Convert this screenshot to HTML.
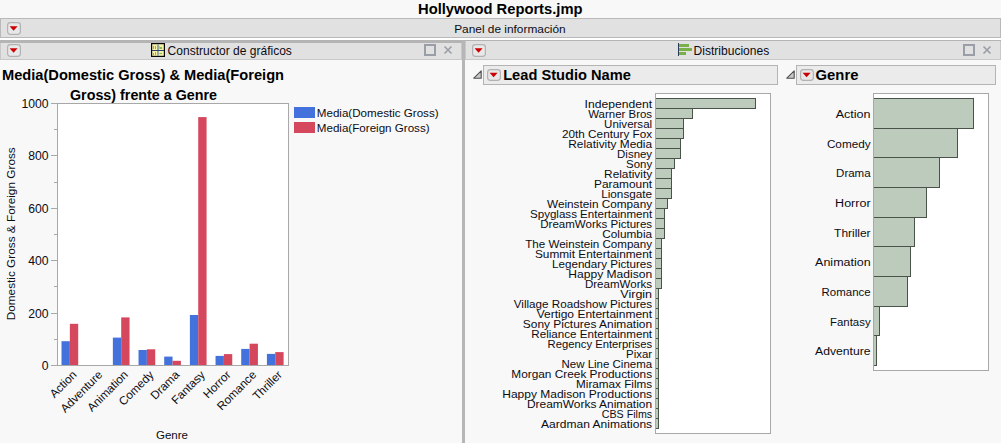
<!DOCTYPE html>
<html><head><meta charset="utf-8"><style>
html,body{margin:0;padding:0;width:1001px;height:443px;overflow:hidden;background:#f8f8f8;}
svg{display:block;font-family:"Liberation Sans", sans-serif;}
</style></head><body>
<svg width="1001" height="443" viewBox="0 0 1001 443">
<rect x="0" y="0" width="1001" height="443" fill="#f8f8f8" />
<text x="418" y="14" font-size="14.6" font-weight="bold" text-anchor="start" fill="#000" textLength="164.5" lengthAdjust="spacingAndGlyphs">Hollywood Reports.jmp</text>
<rect x="0" y="18" width="1001" height="20" fill="#b9b9b9" />
<rect x="1" y="19" width="999" height="18" fill="#e1e1e1" />
<rect x="7.6" y="22.6" width="12.8" height="11.8" rx="2.8" ry="2.8" fill="#e8e8e8" stroke="#b2b2b2" stroke-width="1.2"/>
<path d="M9.6,26.2 L17.6,26.2 L13.6,30.799999999999997 Z" fill="#cc0000"/>
<text x="454.2" y="32.7" font-size="11.7" font-weight="normal" text-anchor="start" fill="#0c0c14" textLength="111.5" lengthAdjust="spacingAndGlyphs">Panel de información</text>
<rect x="0" y="38" width="1001" height="2" fill="#ffffff" />
<rect x="0" y="40" width="462" height="20" fill="#c8c8c8" />
<rect x="0" y="40" width="462" height="3" fill="#b4b4b4" />
<rect x="1" y="43" width="460" height="16" fill="#e1e1e1" />
<rect x="7.6" y="44.6" width="12.8" height="11.8" rx="2.8" ry="2.8" fill="#e8e8e8" stroke="#b2b2b2" stroke-width="1.2"/>
<path d="M9.6,48.2 L17.6,48.2 L13.6,52.800000000000004 Z" fill="#cc0000"/>
<rect x="151.6" y="43.6" width="12.8" height="12.8" fill="#f6f3a8" stroke="#080808" stroke-width="1.2"/>
<rect x="157" y="44" width="2" height="12" fill="#9aaaa4" />
<rect x="152" y="50" width="12" height="1" fill="#2a3f6a" />
<rect x="153" y="46" width="1" height="3" fill="#86bc58" />
<rect x="155" y="46" width="1" height="3" fill="#86bc58" />
<rect x="159" y="46" width="1" height="3" fill="#b0d080" />
<rect x="160" y="47" width="2" height="2" fill="#86bc58" />
<rect x="153" y="53" width="1" height="2" fill="#86bc58" />
<rect x="155" y="52" width="1" height="3" fill="#86bc58" />
<rect x="159" y="53" width="1" height="1" fill="#b0d080" />
<rect x="160" y="53" width="2" height="1" fill="#86bc58" />
<text x="167.6" y="54.5" font-size="11.85" font-weight="normal" text-anchor="start" fill="#0c0c14" textLength="124.3" lengthAdjust="spacingAndGlyphs">Constructor de gráficos</text>
<rect x="425" y="45" width="10" height="10" fill="none" stroke="#9a9ea6" stroke-width="2"/>
<path d="M444.5,46.5 L451.5,53.5 M451.5,46.5 L444.5,53.5" stroke="#9a9ea6" stroke-width="1.6"/>
<rect x="465" y="40" width="536" height="20" fill="#c8c8c8" />
<rect x="465" y="40" width="536" height="1" fill="#b4b4b4" />
<rect x="466" y="41" width="534" height="18" fill="#e1e1e1" />
<rect x="472.6" y="44.6" width="12.8" height="11.8" rx="2.8" ry="2.8" fill="#e8e8e8" stroke="#b2b2b2" stroke-width="1.2"/>
<path d="M474.6,48.2 L482.6,48.2 L478.6,52.800000000000004 Z" fill="#cc0000"/>
<rect x="678" y="43" width="1" height="13" fill="#2a3a5a" />
<rect x="679" y="44" width="10" height="3" fill="#7ab048" />
<rect x="679" y="48" width="13" height="3" fill="#7ab048" />
<rect x="679" y="52" width="7" height="3" fill="#7ab048" />
<text x="693.6" y="54.5" font-size="11.85" font-weight="normal" text-anchor="start" fill="#0c0c14" textLength="75.6" lengthAdjust="spacingAndGlyphs">Distribuciones</text>
<rect x="964" y="45" width="10" height="10" fill="none" stroke="#9a9ea6" stroke-width="2"/>
<path d="M983.5,46.5 L990.5,53.5 M990.5,46.5 L983.5,53.5" stroke="#9a9ea6" stroke-width="1.6"/>
<rect x="462" y="40" width="3" height="403" fill="#b6b6b6" />
<text x="2" y="79.7" font-size="14" font-weight="bold" text-anchor="start" fill="#000" textLength="282" lengthAdjust="spacingAndGlyphs">Media(Domestic Gross) &amp; Media(Foreign</text>
<text x="70" y="99.5" font-size="14" font-weight="bold" text-anchor="start" fill="#000" textLength="147" lengthAdjust="spacingAndGlyphs">Gross) frente a Genre</text>
<rect x="57" y="103" width="232" height="263" fill="#ffffff" />
<rect x="57" y="103" width="232" height="1" fill="#a8a8a8" />
<rect x="288" y="103" width="1" height="263" fill="#a8a8a8" />
<rect x="57" y="103" width="1" height="263" fill="#a8a8a8" />
<rect x="57" y="365" width="232" height="1" fill="#a8a8a8" />
<rect x="51" y="365" width="6" height="1" fill="#a8a8a8" />
<text x="48.5" y="370.1" font-size="12.2" font-weight="normal" text-anchor="end" fill="#0c0c14" >0</text>
<rect x="54" y="339" width="3" height="1" fill="#a8a8a8" />
<rect x="51" y="313" width="6" height="1" fill="#a8a8a8" />
<text x="48.5" y="318.1" font-size="12.2" font-weight="normal" text-anchor="end" fill="#0c0c14" >200</text>
<rect x="54" y="286" width="3" height="1" fill="#a8a8a8" />
<rect x="51" y="260" width="6" height="1" fill="#a8a8a8" />
<text x="48.5" y="265.1" font-size="12.2" font-weight="normal" text-anchor="end" fill="#0c0c14" >400</text>
<rect x="54" y="234" width="3" height="1" fill="#a8a8a8" />
<rect x="51" y="208" width="6" height="1" fill="#a8a8a8" />
<text x="48.5" y="213.1" font-size="12.2" font-weight="normal" text-anchor="end" fill="#0c0c14" >600</text>
<rect x="54" y="182" width="3" height="1" fill="#a8a8a8" />
<rect x="51" y="155" width="6" height="1" fill="#a8a8a8" />
<text x="48.5" y="160.1" font-size="12.2" font-weight="normal" text-anchor="end" fill="#0c0c14" >800</text>
<rect x="54" y="129" width="3" height="1" fill="#a8a8a8" />
<rect x="51" y="103" width="6" height="1" fill="#a8a8a8" />
<text x="48.5" y="108.1" font-size="12.2" font-weight="normal" text-anchor="end" fill="#0c0c14" >1000</text>
<rect x="61.5" y="341.2" width="8.35" height="23.8" fill="#4472dd" />
<rect x="69.85" y="323.8" width="8.35" height="41.2" fill="#d5475c" />
<text x="0" y="0" font-size="11.7" text-anchor="end" fill="#0c0c14" transform="translate(77.35,375.5) rotate(-45)">Action</text>
<text x="0" y="0" font-size="11.7" text-anchor="end" fill="#0c0c14" transform="translate(103.02,375.5) rotate(-45)">Adventure</text>
<rect x="112.85" y="337.6" width="8.35" height="27.4" fill="#4472dd" />
<rect x="121.2" y="317.4" width="8.35" height="47.6" fill="#d5475c" />
<text x="0" y="0" font-size="11.7" text-anchor="end" fill="#0c0c14" transform="translate(128.70,375.5) rotate(-45)">Animation</text>
<rect x="138.53" y="350" width="8.35" height="15" fill="#4472dd" />
<rect x="146.88" y="349.3" width="8.35" height="15.7" fill="#d5475c" />
<text x="0" y="0" font-size="11.7" text-anchor="end" fill="#0c0c14" transform="translate(154.38,375.5) rotate(-45)">Comedy</text>
<rect x="164.2" y="356.6" width="8.35" height="8.4" fill="#4472dd" />
<rect x="172.55" y="360.8" width="8.35" height="4.2" fill="#d5475c" />
<text x="0" y="0" font-size="11.7" text-anchor="end" fill="#0c0c14" transform="translate(180.05,375.5) rotate(-45)">Drama</text>
<rect x="189.88" y="315" width="8.35" height="50" fill="#4472dd" />
<rect x="198.22" y="117.1" width="8.35" height="247.9" fill="#d5475c" />
<text x="0" y="0" font-size="11.7" text-anchor="end" fill="#0c0c14" transform="translate(205.72,375.5) rotate(-45)">Fantasy</text>
<rect x="215.55" y="355.9" width="8.35" height="9.1" fill="#4472dd" />
<rect x="223.9" y="354.1" width="8.35" height="10.9" fill="#d5475c" />
<text x="0" y="0" font-size="11.7" text-anchor="end" fill="#0c0c14" transform="translate(231.40,375.5) rotate(-45)">Horror</text>
<rect x="241.22" y="348.9" width="8.35" height="16.1" fill="#4472dd" />
<rect x="249.57" y="343.7" width="8.35" height="21.3" fill="#d5475c" />
<text x="0" y="0" font-size="11.7" text-anchor="end" fill="#0c0c14" transform="translate(257.07,375.5) rotate(-45)">Romance</text>
<rect x="266.9" y="353.9" width="8.35" height="11.1" fill="#4472dd" />
<rect x="275.25" y="352.1" width="8.35" height="12.9" fill="#d5475c" />
<text x="0" y="0" font-size="11.7" text-anchor="end" fill="#0c0c14" transform="translate(282.75,375.5) rotate(-45)">Thriller</text>
<text x="172" y="439" font-size="11.5" font-weight="normal" text-anchor="middle" fill="#0c0c14" >Genre</text>
<text x="0" y="0" font-size="11.8" text-anchor="middle" fill="#0c0c14" transform="translate(14.6,233.8) rotate(-90)">Domestic Gross &amp; Foreign Gross</text>
<rect x="294" y="107" width="21" height="11" fill="#4472dd" />
<rect x="294" y="122" width="21" height="11" fill="#d5475c" />
<text x="316.8" y="116.8" font-size="11.6" font-weight="normal" text-anchor="start" fill="#0c0c14" >Media(Domestic Gross)</text>
<text x="316.8" y="131.6" font-size="11.6" font-weight="normal" text-anchor="start" fill="#0c0c14" >Media(Foreign Gross)</text>
<path d="M473.8,78.2 L481.2,70.8 L481.2,78.2 Z" fill="#c8c8c8" stroke="#505050" stroke-width="1.1" stroke-linejoin="round"/>
<rect x="483.5" y="65.5" width="294" height="19" fill="#ebebeb" stroke="#b4b4b4" stroke-width="1"/>
<rect x="487.6" y="69.6" width="12.8" height="10.8" rx="2.8" ry="2.8" fill="#e8e8e8" stroke="#b2b2b2" stroke-width="1.2"/>
<path d="M489.6,72.7 L497.6,72.7 L493.6,77.3 Z" fill="#cc0000"/>
<text x="503.2" y="79.9" font-size="14.4" font-weight="bold" text-anchor="start" fill="#000" textLength="127.6" lengthAdjust="spacingAndGlyphs">Lead Studio Name</text>
<path d="M786.8,78.2 L794.2,70.8 L794.2,78.2 Z" fill="#c8c8c8" stroke="#505050" stroke-width="1.1" stroke-linejoin="round"/>
<rect x="796.5" y="65.5" width="199" height="19" fill="#ebebeb" stroke="#b4b4b4" stroke-width="1"/>
<rect x="800.6" y="69.6" width="12.8" height="10.8" rx="2.8" ry="2.8" fill="#e8e8e8" stroke="#b2b2b2" stroke-width="1.2"/>
<path d="M802.6,72.7 L810.6,72.7 L806.6,77.3 Z" fill="#cc0000"/>
<text x="815.6" y="79.6" font-size="14.3" font-weight="bold" text-anchor="start" fill="#000" textLength="42.8" lengthAdjust="spacingAndGlyphs">Genre</text>
<rect x="655" y="93" width="116" height="341" fill="#a8a8a8" />
<rect x="656" y="94" width="114" height="339" fill="#ffffff" />
<rect x="655" y="98" width="101" height="11" fill="#4a534a" />
<rect x="656" y="99" width="99" height="9" fill="#bccbbb" />
<text x="652.1" y="107.8" font-size="11.6" font-weight="normal" text-anchor="end" fill="#0c0c14" textLength="67.5" lengthAdjust="spacingAndGlyphs">Independent</text>
<rect x="655" y="108" width="38" height="11" fill="#4a534a" />
<rect x="656" y="109" width="36" height="9" fill="#bccbbb" />
<text x="652.1" y="117.8" font-size="11.6" font-weight="normal" text-anchor="end" fill="#0c0c14" textLength="63.9" lengthAdjust="spacingAndGlyphs">Warner Bros</text>
<rect x="655" y="118" width="29" height="11" fill="#4a534a" />
<rect x="656" y="119" width="27" height="9" fill="#bccbbb" />
<text x="652.1" y="127.8" font-size="11.6" font-weight="normal" text-anchor="end" fill="#0c0c14" textLength="48.0" lengthAdjust="spacingAndGlyphs">Universal</text>
<rect x="655" y="128" width="29" height="11" fill="#4a534a" />
<rect x="656" y="129" width="27" height="9" fill="#bccbbb" />
<text x="652.1" y="137.8" font-size="11.6" font-weight="normal" text-anchor="end" fill="#0c0c14" textLength="90.1" lengthAdjust="spacingAndGlyphs">20th Century Fox</text>
<rect x="655" y="138" width="26" height="11" fill="#4a534a" />
<rect x="656" y="139" width="24" height="9" fill="#bccbbb" />
<text x="652.1" y="147.8" font-size="11.6" font-weight="normal" text-anchor="end" fill="#0c0c14" textLength="83.8" lengthAdjust="spacingAndGlyphs">Relativity Media</text>
<rect x="655" y="148" width="26" height="11" fill="#4a534a" />
<rect x="656" y="149" width="24" height="9" fill="#bccbbb" />
<text x="652.1" y="157.8" font-size="11.6" font-weight="normal" text-anchor="end" fill="#0c0c14" textLength="35.0" lengthAdjust="spacingAndGlyphs">Disney</text>
<rect x="655" y="158" width="20" height="11" fill="#4a534a" />
<rect x="656" y="159" width="18" height="9" fill="#bccbbb" />
<text x="652.1" y="167.8" font-size="11.6" font-weight="normal" text-anchor="end" fill="#0c0c14" textLength="26.0" lengthAdjust="spacingAndGlyphs">Sony</text>
<rect x="655" y="168" width="17" height="11" fill="#4a534a" />
<rect x="656" y="169" width="15" height="9" fill="#bccbbb" />
<text x="652.1" y="177.8" font-size="11.6" font-weight="normal" text-anchor="end" fill="#0c0c14" textLength="48.0" lengthAdjust="spacingAndGlyphs">Relativity</text>
<rect x="655" y="178" width="17" height="11" fill="#4a534a" />
<rect x="656" y="179" width="15" height="9" fill="#bccbbb" />
<text x="652.1" y="187.8" font-size="11.6" font-weight="normal" text-anchor="end" fill="#0c0c14" textLength="58.1" lengthAdjust="spacingAndGlyphs">Paramount</text>
<rect x="655" y="188" width="17" height="11" fill="#4a534a" />
<rect x="656" y="189" width="15" height="9" fill="#bccbbb" />
<text x="652.1" y="197.8" font-size="11.6" font-weight="normal" text-anchor="end" fill="#0c0c14" textLength="50.9" lengthAdjust="spacingAndGlyphs">Lionsgate</text>
<rect x="655" y="198" width="13" height="11" fill="#4a534a" />
<rect x="656" y="199" width="11" height="9" fill="#bccbbb" />
<text x="652.1" y="207.8" font-size="11.6" font-weight="normal" text-anchor="end" fill="#0c0c14" textLength="105.1" lengthAdjust="spacingAndGlyphs">Weinstein Company</text>
<rect x="655" y="208" width="10" height="11" fill="#4a534a" />
<rect x="656" y="209" width="8" height="9" fill="#bccbbb" />
<text x="652.1" y="217.8" font-size="11.6" font-weight="normal" text-anchor="end" fill="#0c0c14" textLength="122.1" lengthAdjust="spacingAndGlyphs">Spyglass Entertainment</text>
<rect x="655" y="218" width="10" height="11" fill="#4a534a" />
<rect x="656" y="219" width="8" height="9" fill="#bccbbb" />
<text x="652.1" y="227.8" font-size="11.6" font-weight="normal" text-anchor="end" fill="#0c0c14" textLength="111.8" lengthAdjust="spacingAndGlyphs">DreamWorks Pictures</text>
<rect x="655" y="228" width="10" height="11" fill="#4a534a" />
<rect x="656" y="229" width="8" height="9" fill="#bccbbb" />
<text x="652.1" y="237.8" font-size="11.6" font-weight="normal" text-anchor="end" fill="#0c0c14" textLength="49.8" lengthAdjust="spacingAndGlyphs">Columbia</text>
<rect x="655" y="238" width="7" height="11" fill="#4a534a" />
<rect x="656" y="239" width="5" height="9" fill="#bccbbb" />
<text x="652.1" y="247.8" font-size="11.6" font-weight="normal" text-anchor="end" fill="#0c0c14" textLength="126.9" lengthAdjust="spacingAndGlyphs">The Weinstein Company</text>
<rect x="655" y="248" width="7" height="11" fill="#4a534a" />
<rect x="656" y="249" width="5" height="9" fill="#bccbbb" />
<text x="652.1" y="257.8" font-size="11.6" font-weight="normal" text-anchor="end" fill="#0c0c14" textLength="117.2" lengthAdjust="spacingAndGlyphs">Summit Entertainment</text>
<rect x="655" y="258" width="7" height="11" fill="#4a534a" />
<rect x="656" y="259" width="5" height="9" fill="#bccbbb" />
<text x="652.1" y="267.8" font-size="11.6" font-weight="normal" text-anchor="end" fill="#0c0c14" textLength="100.0" lengthAdjust="spacingAndGlyphs">Legendary Pictures</text>
<rect x="655" y="268" width="7" height="11" fill="#4a534a" />
<rect x="656" y="269" width="5" height="9" fill="#bccbbb" />
<text x="652.1" y="277.8" font-size="11.6" font-weight="normal" text-anchor="end" fill="#0c0c14" textLength="83.8" lengthAdjust="spacingAndGlyphs">Happy Madison</text>
<rect x="655" y="278" width="7" height="11" fill="#4a534a" />
<rect x="656" y="279" width="5" height="9" fill="#bccbbb" />
<text x="652.1" y="287.8" font-size="11.6" font-weight="normal" text-anchor="end" fill="#0c0c14" textLength="67.2" lengthAdjust="spacingAndGlyphs">DreamWorks</text>
<rect x="655" y="288" width="4" height="11" fill="#4a534a" />
<rect x="656" y="289" width="2" height="9" fill="#bccbbb" />
<text x="652.1" y="297.8" font-size="11.6" font-weight="normal" text-anchor="end" fill="#0c0c14" textLength="31.8" lengthAdjust="spacingAndGlyphs">Virgin</text>
<rect x="655" y="298" width="4" height="11" fill="#4a534a" />
<rect x="656" y="299" width="2" height="9" fill="#bccbbb" />
<text x="652.1" y="307.8" font-size="11.6" font-weight="normal" text-anchor="end" fill="#0c0c14" textLength="138.3" lengthAdjust="spacingAndGlyphs">Village Roadshow Pictures</text>
<rect x="655" y="308" width="4" height="11" fill="#4a534a" />
<rect x="656" y="309" width="2" height="9" fill="#bccbbb" />
<text x="652.1" y="317.8" font-size="11.6" font-weight="normal" text-anchor="end" fill="#0c0c14" textLength="115.4" lengthAdjust="spacingAndGlyphs">Vertigo Entertainment</text>
<rect x="655" y="318" width="4" height="11" fill="#4a534a" />
<rect x="656" y="319" width="2" height="9" fill="#bccbbb" />
<text x="652.1" y="327.8" font-size="11.6" font-weight="normal" text-anchor="end" fill="#0c0c14" textLength="129.3" lengthAdjust="spacingAndGlyphs">Sony Pictures Animation</text>
<rect x="655" y="328" width="4" height="11" fill="#4a534a" />
<rect x="656" y="329" width="2" height="9" fill="#bccbbb" />
<text x="652.1" y="337.8" font-size="11.6" font-weight="normal" text-anchor="end" fill="#0c0c14" textLength="120.8" lengthAdjust="spacingAndGlyphs">Reliance Entertainment</text>
<rect x="655" y="338" width="4" height="11" fill="#4a534a" />
<rect x="656" y="339" width="2" height="9" fill="#bccbbb" />
<text x="652.1" y="347.8" font-size="11.6" font-weight="normal" text-anchor="end" fill="#0c0c14" textLength="104.5" lengthAdjust="spacingAndGlyphs">Regency Enterprises</text>
<rect x="655" y="348" width="4" height="11" fill="#4a534a" />
<rect x="656" y="349" width="2" height="9" fill="#bccbbb" />
<text x="652.1" y="357.8" font-size="11.6" font-weight="normal" text-anchor="end" fill="#0c0c14" textLength="26.0" lengthAdjust="spacingAndGlyphs">Pixar</text>
<rect x="655" y="358" width="4" height="11" fill="#4a534a" />
<rect x="656" y="359" width="2" height="9" fill="#bccbbb" />
<text x="652.1" y="367.8" font-size="11.6" font-weight="normal" text-anchor="end" fill="#0c0c14" textLength="90.6" lengthAdjust="spacingAndGlyphs">New Line Cinema</text>
<rect x="655" y="368" width="4" height="11" fill="#4a534a" />
<rect x="656" y="369" width="2" height="9" fill="#bccbbb" />
<text x="652.1" y="377.8" font-size="11.6" font-weight="normal" text-anchor="end" fill="#0c0c14" textLength="140.8" lengthAdjust="spacingAndGlyphs">Morgan Creek Productions</text>
<rect x="655" y="378" width="4" height="11" fill="#4a534a" />
<rect x="656" y="379" width="2" height="9" fill="#bccbbb" />
<text x="652.1" y="387.8" font-size="11.6" font-weight="normal" text-anchor="end" fill="#0c0c14" textLength="76.0" lengthAdjust="spacingAndGlyphs">Miramax Films</text>
<rect x="655" y="388" width="4" height="11" fill="#4a534a" />
<rect x="656" y="389" width="2" height="9" fill="#bccbbb" />
<text x="652.1" y="397.8" font-size="11.6" font-weight="normal" text-anchor="end" fill="#0c0c14" textLength="149.8" lengthAdjust="spacingAndGlyphs">Happy Madison Productions</text>
<rect x="655" y="398" width="4" height="11" fill="#4a534a" />
<rect x="656" y="399" width="2" height="9" fill="#bccbbb" />
<text x="652.1" y="407.8" font-size="11.6" font-weight="normal" text-anchor="end" fill="#0c0c14" textLength="125.1" lengthAdjust="spacingAndGlyphs">DreamWorks Animation</text>
<rect x="655" y="408" width="4" height="11" fill="#4a534a" />
<rect x="656" y="409" width="2" height="9" fill="#bccbbb" />
<text x="652.1" y="417.8" font-size="11.6" font-weight="normal" text-anchor="end" fill="#0c0c14" textLength="50.3" lengthAdjust="spacingAndGlyphs">CBS Films</text>
<rect x="655" y="418" width="4" height="11" fill="#4a534a" />
<rect x="656" y="419" width="2" height="9" fill="#bccbbb" />
<text x="652.1" y="427.8" font-size="11.6" font-weight="normal" text-anchor="end" fill="#0c0c14" textLength="111.0" lengthAdjust="spacingAndGlyphs">Aardman Animations</text>
<rect x="655" y="93" width="1" height="341" fill="#a8a8a8" />
<rect x="873" y="93" width="116" height="278" fill="#a8a8a8" />
<rect x="874" y="94" width="114" height="276" fill="#ffffff" />
<rect x="873" y="98" width="101" height="31" fill="#4a534a" />
<rect x="874" y="99" width="99" height="29" fill="#bccbbb" />
<text x="870.6" y="118.0" font-size="11.7" font-weight="normal" text-anchor="end" fill="#0c0c14" textLength="34.9" lengthAdjust="spacingAndGlyphs">Action</text>
<rect x="873" y="128" width="85" height="30" fill="#4a534a" />
<rect x="874" y="129" width="83" height="28" fill="#bccbbb" />
<text x="870.6" y="147.5" font-size="11.7" font-weight="normal" text-anchor="end" fill="#0c0c14" textLength="43.7" lengthAdjust="spacingAndGlyphs">Comedy</text>
<rect x="873" y="157" width="67" height="31" fill="#4a534a" />
<rect x="874" y="158" width="65" height="29" fill="#bccbbb" />
<text x="870.6" y="177.0" font-size="11.7" font-weight="normal" text-anchor="end" fill="#0c0c14" textLength="34.5" lengthAdjust="spacingAndGlyphs">Drama</text>
<rect x="873" y="187" width="54" height="31" fill="#4a534a" />
<rect x="874" y="188" width="52" height="29" fill="#bccbbb" />
<text x="870.6" y="207.0" font-size="11.7" font-weight="normal" text-anchor="end" fill="#0c0c14" textLength="35.5" lengthAdjust="spacingAndGlyphs">Horror</text>
<rect x="873" y="217" width="42" height="30" fill="#4a534a" />
<rect x="874" y="218" width="40" height="28" fill="#bccbbb" />
<text x="870.6" y="236.5" font-size="11.7" font-weight="normal" text-anchor="end" fill="#0c0c14" textLength="36.5" lengthAdjust="spacingAndGlyphs">Thriller</text>
<rect x="873" y="246" width="38" height="31" fill="#4a534a" />
<rect x="874" y="247" width="36" height="29" fill="#bccbbb" />
<text x="870.6" y="266.0" font-size="11.7" font-weight="normal" text-anchor="end" fill="#0c0c14" textLength="55.5" lengthAdjust="spacingAndGlyphs">Animation</text>
<rect x="873" y="276" width="35" height="31" fill="#4a534a" />
<rect x="874" y="277" width="33" height="29" fill="#bccbbb" />
<text x="870.6" y="296.0" font-size="11.7" font-weight="normal" text-anchor="end" fill="#0c0c14" textLength="49.0" lengthAdjust="spacingAndGlyphs">Romance</text>
<rect x="873" y="306" width="7" height="30" fill="#4a534a" />
<rect x="874" y="307" width="5" height="28" fill="#bccbbb" />
<text x="870.6" y="325.5" font-size="11.7" font-weight="normal" text-anchor="end" fill="#0c0c14" textLength="40.6" lengthAdjust="spacingAndGlyphs">Fantasy</text>
<rect x="873" y="335" width="4" height="31" fill="#4a534a" />
<rect x="874" y="336" width="2" height="29" fill="#bccbbb" />
<text x="870.6" y="355.0" font-size="11.7" font-weight="normal" text-anchor="end" fill="#0c0c14" textLength="55.5" lengthAdjust="spacingAndGlyphs">Adventure</text>
<rect x="873" y="93" width="1" height="278" fill="#a8a8a8" />
</svg></body></html>
